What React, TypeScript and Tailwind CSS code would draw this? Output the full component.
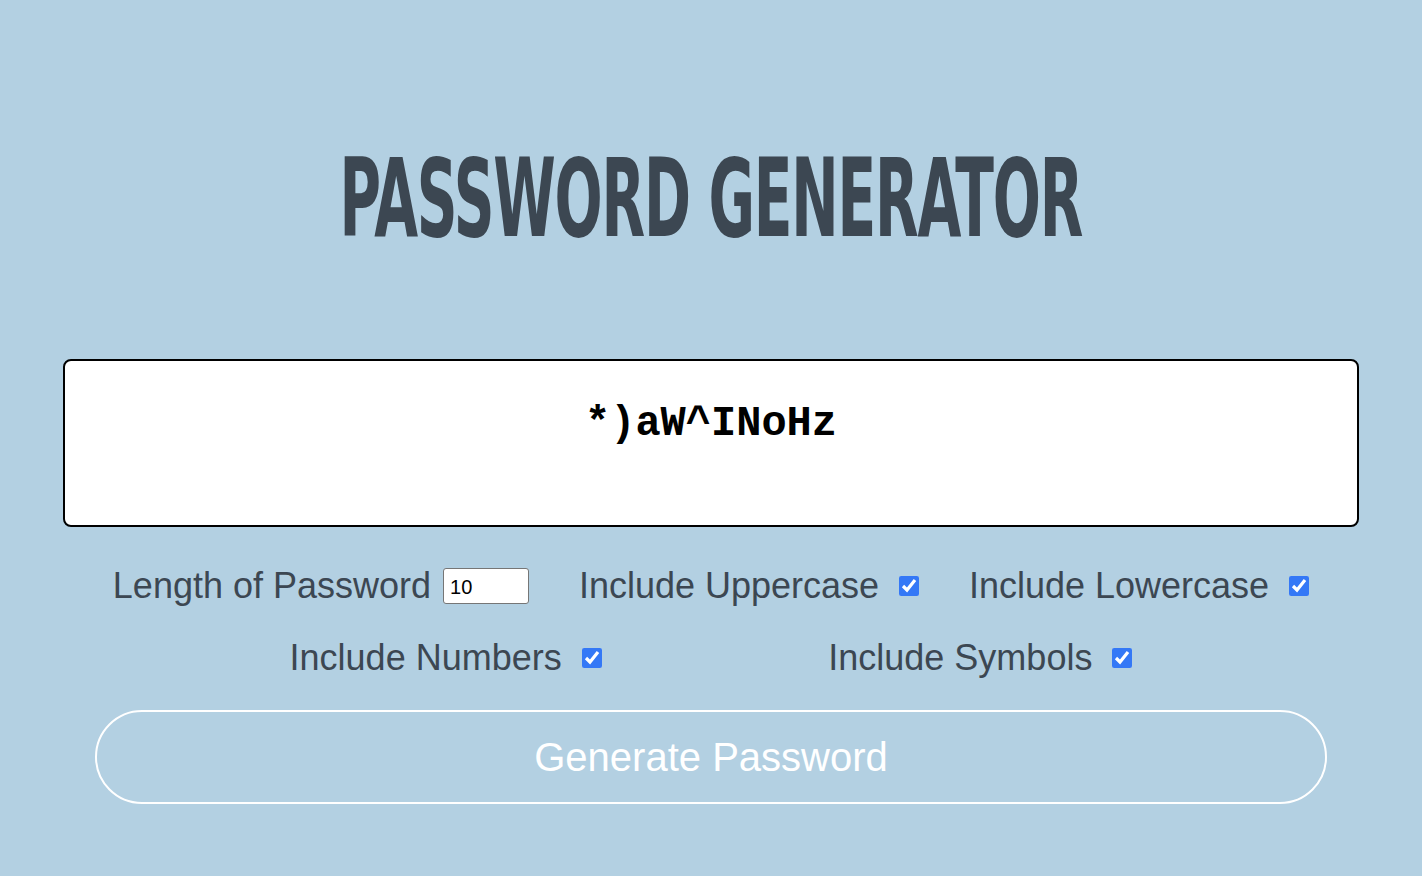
import { useState } from 'react';

const Option = ({
  label,
  checked,
  onChange,
}: {
  label: string;
  checked: boolean;
  onChange: (v: boolean) => void;
}) => (
  <label className="flex items-center gap-5">
    <span>{label}</span>
    <input
      type="checkbox"
      checked={checked}
      onChange={(e) => onChange(e.target.checked)}
      className="w-5 h-5 accent-[#3478f6]"
    />
  </label>
);

export default function App() {
  const [length, setLength] = useState('10');
  const [upper, setUpper] = useState(true);
  const [lower, setLower] = useState(true);
  const [numbers, setNumbers] = useState(true);
  const [symbols, setSymbols] = useState(true);

  return (
    <div className="min-h-screen bg-[#b3d0e2] font-['Liberation_Sans',Arial,sans-serif] text-[#3c4752]">
      <div className="px-[63px] pt-[150px]">
        {/* title */}
        <div className="flex justify-center h-[98px] items-center">
          <h1 className="inline-block scale-x-[0.583] text-[108px] leading-none font-bold tracking-[-2px] text-[#3c4752] font-['Liberation_Sans_Narrow','DejaVu_Sans_Condensed',sans-serif] whitespace-nowrap">
            PASSWORD GENERATOR
          </h1>
        </div>

        {/* result */}
        <div className="mt-[111px] h-[168px] bg-white border-2 border-black rounded-lg pt-[32px] text-center">
          <span className="font-['Liberation_Mono',monospace] font-bold text-[42px] text-black">
            *)aW^INoHz
          </span>
        </div>

        {/* options */}
        <div className="flex flex-wrap justify-evenly text-[36px] mt-[32px] gap-y-[18px]">
          <label className="flex items-center gap-3">
            <span>Length of Password</span>
            <input
              type="number"
              value={length}
              onChange={(e) => setLength(e.target.value)}
              className="w-[86px] h-[36px] bg-white border border-[#767676] rounded-[3px] text-[20px] text-black px-[6px] pt-[2px] [appearance:textfield]"
            />
          </label>
          <Option label="Include Uppercase" checked={upper} onChange={setUpper} />
          <Option label="Include Lowercase" checked={lower} onChange={setLower} />
          <Option label="Include Numbers" checked={numbers} onChange={setNumbers} />
          <Option label="Include Symbols" checked={symbols} onChange={setSymbols} />
        </div>

        {/* button */}
        <div className="flex justify-center mt-[25px]">
          <button className="w-[95%] h-[94px] rounded-full border-2 border-white text-white text-[40px] bg-transparent">
            Generate Password
          </button>
        </div>
      </div>
    </div>
  );
}
